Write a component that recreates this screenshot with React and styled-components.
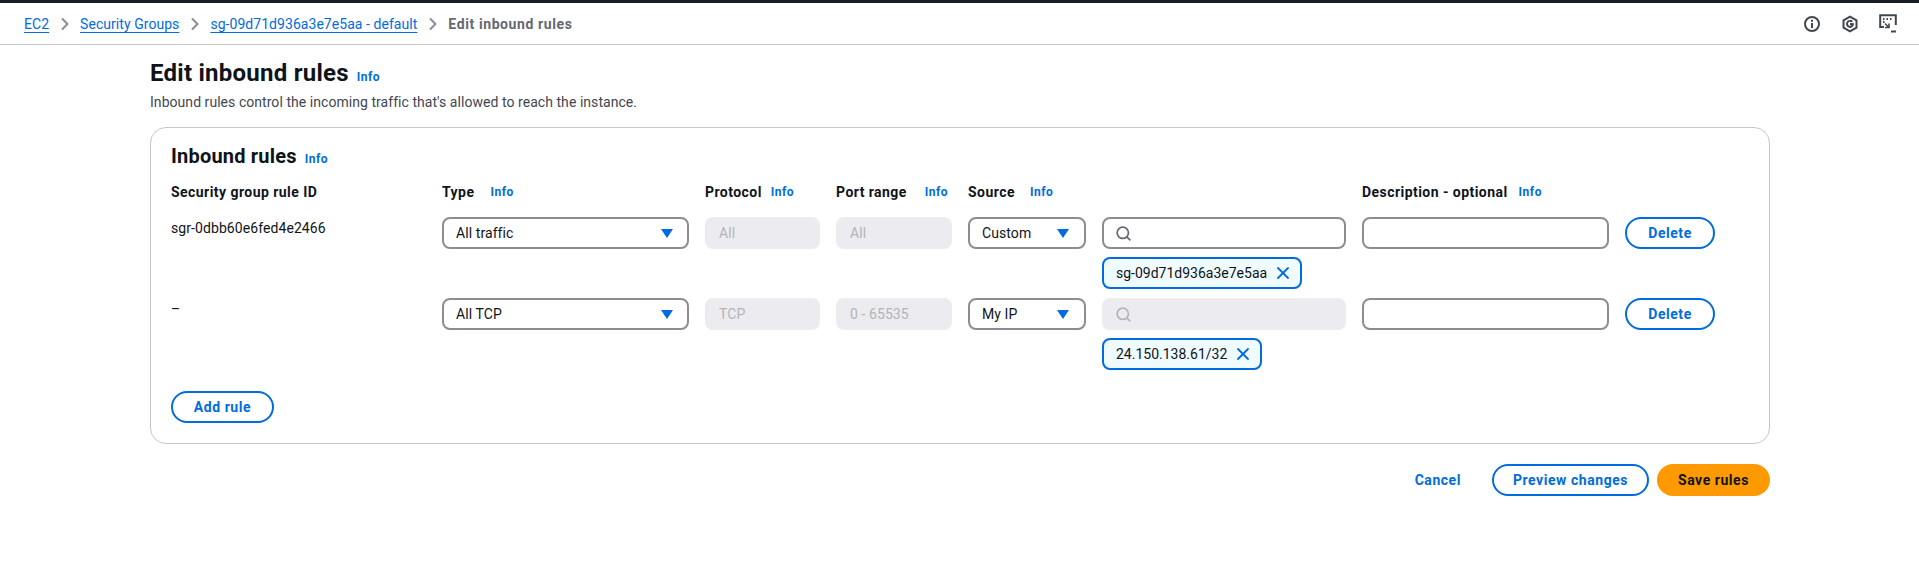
import React from "react";
import styled, { createGlobalStyle } from "styled-components";
import { ChevronRight, Search, X } from "lucide-react";

const GlobalStyle = createGlobalStyle`
  body {
    margin: 0;
    background: #fff;
    color: #0f141a;
    font-family: Roboto, "Noto Sans", sans-serif;
    font-size: 14px;
    line-height: 20px;
    letter-spacing: 0.08px;
  }
`;

const Caret = () => (
  <SCaret viewBox="0 0 14 11">
    <path d="M1 1h12L7 10z" fill="#006ce0" />
  </SCaret>
);

const Row = ({ id, type, protocol, port, source, searchDisabled, tag }) => (
  <SGrid>
    <SRuleId>{id}</SRuleId>
    <SSelect>
      {type}
      <Caret />
    </SSelect>
    <SReadOnly>{protocol}</SReadOnly>
    <SReadOnly>{port}</SReadOnly>
    <SSelect $compact>
      {source}
      <Caret />
    </SSelect>
    <SStack>
      <SSearch $disabled={searchDisabled}>
        <Search size={17} strokeWidth={2.4} />
      </SSearch>
      <STag>
        {tag}
        <X size={20} strokeWidth={2.2} color="#006ce0" />
      </STag>
    </SStack>
    <SInput aria-label="Description" />
    <SButton>Delete</SButton>
  </SGrid>
);

const App = () => (
  <>
    <GlobalStyle />
    <STopBar>
      <SCrumbs>
        <SCrumbLink>EC2</SCrumbLink>
        <ChevronRight size={20} color="#8c8c94" strokeWidth={2.4} />
        <SCrumbLink>Security Groups</SCrumbLink>
        <ChevronRight size={20} color="#8c8c94" strokeWidth={2.4} />
        <SCrumbLink>sg-09d71d936a3e7e5aa - default</SCrumbLink>
        <ChevronRight size={20} color="#8c8c94" strokeWidth={2.4} />
        <SCrumbCurrent>Edit inbound rules</SCrumbCurrent>
      </SCrumbs>
      <STools>
        <svg width="18" height="18" viewBox="0 0 18 18" fill="none" stroke="#414750" strokeWidth="2">
          <circle cx="9" cy="9" r="7" />
          <path d="M9 8v5M9 4.8v2" />
        </svg>
        <svg width="18" height="18" viewBox="0 0 18 18" fill="none" stroke="#414750" strokeWidth="2">
          <path d="M9 1.6l6.5 3.7v7.4L9 16.4l-6.5-3.7V5.3z" />
          <path d="M11.2 6.8A3 3 0 1 0 12 9.2L9 9" />
        </svg>
        <svg width="18" height="20" viewBox="0 0 18 20" fill="none" stroke="#414750" strokeWidth="2">
          <path d="M5 13H1.2V1.2h15.6V11" />
          <path d="M4 5h1.5M7.5 5H9M11 5h1.5M4 8h1.5" />
          <path d="M6 9.5l4 4M10 9.5v4H6" strokeWidth="1.6" />
          <path d="M12 17.5h5" />
        </svg>
      </STools>
    </STopBar>

    <SMain>
      <STitleRow>
        <STitle>Edit inbound rules</STitle>
        <SInfo>Info</SInfo>
      </STitleRow>
      <SSubtitle>Inbound rules control the incoming traffic that's allowed to reach the instance.</SSubtitle>

      <SCard>
        <SCardTitleRow>
          <SCardTitle>Inbound rules</SCardTitle>
          <SInfo>Info</SInfo>
        </SCardTitleRow>

        <SHeaderGrid>
          <SLabel>Security group rule ID</SLabel>
          <SLabel $gap={16}>Type <SInfo>Info</SInfo></SLabel>
          <SLabel $gap={9}>Protocol <SInfo>Info</SInfo></SLabel>
          <SLabel $gap={18}>Port range <SInfo>Info</SInfo></SLabel>
          <SLabel $gap={15}>Source <SInfo>Info</SInfo></SLabel>
          <span />
          <SLabel $gap={11}>Description - optional <SInfo>Info</SInfo></SLabel>
          <span />
        </SHeaderGrid>

        <SRows>
          <Row
            id="sgr-0dbb60e6fed4e2466"
            type="All traffic"
            protocol="All"
            port="All"
            source="Custom"
            tag="sg-09d71d936a3e7e5aa"
          />
          <Row
            id="–"
            type="All TCP"
            protocol="TCP"
            port="0 - 65535"
            source="My IP"
            searchDisabled
            tag="24.150.138.61/32"
          />
        </SRows>

        <SAddRule>Add rule</SAddRule>
      </SCard>

      <SFooter>
        <SCancel>Cancel</SCancel>
        <SButton $wide>Preview changes</SButton>
        <SPrimary>Save rules</SPrimary>
      </SFooter>
    </SMain>
  </>
);

export default App;

const STopBar = styled.header`
  display: flex;
  justify-content: space-between;
  align-items: center;
  box-sizing: border-box;
  height: 45px;
  padding: 0 22px 0 24px;
  border-top: 3px solid #161d26;
  border-bottom: 1px solid #c6c6cd;
`;

const SCrumbs = styled.nav`
  display: flex;
  align-items: center;
  gap: 5.5px;
  font-size: 14px;
`;

const SCrumbLink = styled.a`
  color: #006ce0;
  letter-spacing: 0.05px;
  text-decoration: underline;
  text-underline-offset: 3px;
`;

const SCrumbCurrent = styled.span`
  color: #656871;
  font-weight: 700;
  letter-spacing: 0.6px;
`;

const STools = styled.div`
  display: flex;
  align-items: center;
  gap: 20px;
`;

const SMain = styled.main`
  padding: 0 149px 0 150px;
`;

const STitleRow = styled.div`
  display: flex;
  align-items: baseline;
  gap: 8px;
  margin-top: 13px;
`;

const STitle = styled.h1`
  margin: 0;
  font-size: 24px;
  line-height: 30px;
  font-weight: 700;
  letter-spacing: 0.25px;
`;

const SInfo = styled.a`
  color: #006ce0;
  font-size: 12px;
  font-weight: 700;
  line-height: 16px;
  letter-spacing: 0.5px;
`;

const SSubtitle = styled.p`
  margin: 4px 0 15px;
  color: #424650;
  font-size: 14px;
  line-height: 20px;
  letter-spacing: 0.05px;
`;

const SCard = styled.section`
  box-sizing: border-box;
  height: 317px;
  padding: 16px 20px 20px;
  border: 1px solid #c6c6cd;
  border-radius: 16px;
`;

const SCardTitleRow = styled.div`
  display: flex;
  align-items: baseline;
  gap: 8px;
`;

const SCardTitle = styled.h2`
  margin: 0;
  font-size: 20px;
  line-height: 24px;
  font-weight: 700;
  letter-spacing: 0.2px;
`;

const SGrid = styled.div`
  display: grid;
  grid-template-columns: 255px 247px 115px 116px 118px 244px 247px 90px;
  column-gap: 16px;
  align-items: start;
`;

const SHeaderGrid = styled(SGrid)`
  margin-top: 14px;
  height: 26px;
`;

const SLabel = styled.div`
  display: flex;
  align-items: center;
  gap: ${(p) => p.$gap || 8}px;
  font-weight: 700;
  font-size: 14px;
  line-height: 20px;
  letter-spacing: 0.45px;
  white-space: nowrap;
`;

const SRows = styled.div`
  display: flex;
  flex-direction: column;
  gap: 9px;
  margin-top: 9px;
`;

const SRuleId = styled.div`
  padding-top: 1px;
  color: #0f141a;
`;

const SSelect = styled.div`
  display: flex;
  justify-content: space-between;
  align-items: center;
  box-sizing: border-box;
  height: 32px;
  padding: 0 ${(p) => (p.$compact ? 14 : 13)}px 0 12px;
  border: 2px solid #8c8c94;
  border-radius: 8px;
  background: #fff;
`;

const SCaret = styled.svg`
  width: 14px;
  height: 11px;
`;

const SReadOnly = styled.div`
  display: flex;
  align-items: center;
  box-sizing: border-box;
  height: 32px;
  padding: 0 14px;
  border-radius: 8px;
  background: #ebebf0;
  color: #b4b4bb;
`;

const SStack = styled.div`
  display: flex;
  flex-direction: column;
  align-items: flex-start;
  gap: 8px;
`;

const SSearch = styled.div`
  display: flex;
  align-items: center;
  box-sizing: border-box;
  width: 100%;
  height: 32px;
  padding: 0 11px;
  border: 2px solid ${(p) => (p.$disabled ? "#ebebf0" : "#8c8c94")};
  border-radius: 8px;
  background: ${(p) => (p.$disabled ? "#ebebf0" : "#fff")};
  color: ${(p) => (p.$disabled ? "#b4b4bb" : "#656871")};
`;

const STag = styled.div`
  display: inline-flex;
  align-items: center;
  gap: 6px;
  box-sizing: border-box;
  height: 32px;
  padding: 0 7px 0 12px;
  border: 2px solid #006ce0;
  border-radius: 8px;
  background: #f0fbff;
  letter-spacing: 0;
  white-space: nowrap;
`;

const SInput = styled.input`
  box-sizing: border-box;
  width: 100%;
  height: 32px;
  padding: 0 12px;
  border: 2px solid #8c8c94;
  border-radius: 8px;
  background: #fff;
  font: inherit;
`;

const SButton = styled.button`
  box-sizing: border-box;
  width: ${(p) => (p.$wide ? "157px" : "90px")};
  height: 32px;
  padding: 0;
  border: 2px solid #006ce0;
  border-radius: 20px;
  background: #fff;
  color: #006ce0;
  font: inherit;
  font-weight: 700;
  letter-spacing: 0.55px;
  cursor: pointer;
`;

const SAddRule = styled(SButton)`
  display: block;
  width: 103px;
  margin-top: 21px;
`;

const SFooter = styled.footer`
  display: flex;
  justify-content: flex-end;
  align-items: center;
  margin-top: 20px;
`;

const SCancel = styled.a`
  margin-right: 31px;
  color: #006ce0;
  font-weight: 700;
  letter-spacing: 0.55px;
`;

const SPrimary = styled.button`
  box-sizing: border-box;
  width: 113px;
  height: 32px;
  margin-left: 8px;
  padding: 0;
  border: none;
  border-radius: 20px;
  background: #ff9900;
  color: #0f141a;
  font: inherit;
  font-weight: 700;
  letter-spacing: 0.55px;
  cursor: pointer;
`;
